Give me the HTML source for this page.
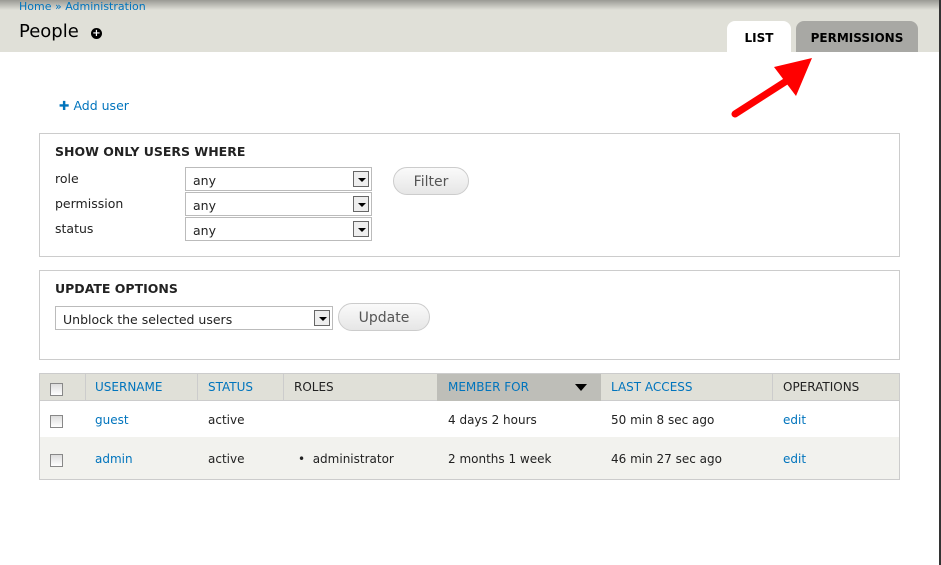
<!DOCTYPE html>
<html><head><meta charset="utf-8"><style>
*{margin:0;padding:0;box-sizing:border-box}
body{width:941px;height:565px;overflow:hidden;background:#fff;font-family:"DejaVu Sans","Liberation Sans",sans-serif;font-size:12px;color:#222;position:relative}
.hdr{position:absolute;left:0;top:0;width:941px;height:52px;background:#e0e0d8}
.hdr:before{content:"";position:absolute;left:0;top:0;right:0;height:10px;background:linear-gradient(#9a9a94,#e0e0d8)}
a,.lnk{color:#0074bd;text-decoration:none}
.abs{position:absolute}
.tab{position:absolute;top:21px;height:31px;border-radius:8px 8px 0 0;font-weight:bold;font-size:12px;text-align:center;line-height:35px;color:#000}
.box{position:absolute;left:39px;width:861px;border:1px solid #ccc}
.sel{position:absolute;height:24px;border:1px solid #bbb;background:#fff;padding-left:7px;line-height:25px;font-size:12.5px}
.sel i{position:absolute;right:2px;top:3px;width:16px;height:16px;border:1px solid #666;background:#eee}
.sel i:after{content:"";position:absolute;left:4px;top:6px;border:4px solid transparent;border-top:4px solid #000;border-bottom:0}
.btn{position:absolute;height:28px;border:1px solid #ccc;border-radius:14px;background:linear-gradient(#fafafa,#e6e6e6);color:#555;font-size:14px;text-align:center;line-height:28px}
.cb{position:absolute;width:13px;height:13px;border:1px solid #888;background:linear-gradient(#ddd,#fff)}
.t{position:absolute;font-size:12px}
</style></head><body>
<div class="hdr"></div>
<div class="abs" style="left:19px;top:0;font-size:11px;color:#0074bd">Home » Administration</div>
<div class="abs" style="left:19px;top:21px;font-size:18px;color:#000">People</div>
<div class="abs" style="left:91px;top:28px;width:11px;height:11px;border-radius:50%;background:#000;color:#fff;font-size:10px;line-height:11px;text-align:center;font-weight:bold">+</div>
<div class="tab" style="left:727px;width:64px;background:#fff">LIST</div>
<div class="tab" style="left:796px;width:122px;background:#a8a8a4">PERMISSIONS</div>
<div class="abs" style="left:939px;top:0;width:2px;height:565px;background:#333"></div>
<svg class="abs" style="left:728px;top:56px" width="90" height="62"><path d="M7 58 L60 24" stroke="#f00" stroke-width="7" stroke-linecap="round"/><path d="M84 2 L46 11 L68 40 Z" fill="#f00"/></svg>
<div class="abs" style="left:59px;top:98px;font-size:12.5px;color:#0074bd"><b>✚</b> Add user</div>
<div class="box" style="top:133px;height:124px"></div>
<div class="abs" style="left:55px;top:144px;font-weight:bold;font-size:12.5px">SHOW ONLY USERS WHERE</div>
<div class="t" style="left:55px;top:171px;font-size:12.5px">role</div>
<div class="t" style="left:55px;top:196px;font-size:12.5px">permission</div>
<div class="t" style="left:55px;top:221px;font-size:12.5px">status</div>
<div class="sel" style="left:185px;top:167px;width:187px">any<i></i></div>
<div class="sel" style="left:185px;top:192px;width:187px">any<i></i></div>
<div class="sel" style="left:185px;top:217px;width:187px">any<i></i></div>
<div class="btn" style="left:393px;top:167px;width:76px">Filter</div>
<div class="box" style="top:270px;height:90px"></div>
<div class="abs" style="left:55px;top:281px;font-weight:bold;font-size:12.5px">UPDATE OPTIONS</div>
<div class="sel" style="left:55px;top:306px;width:278px">Unblock the selected users<i></i></div>
<div class="btn" style="left:338px;top:303px;width:92px">Update</div>
<div class="box" style="top:373px;height:107px;background:#fff"></div>
<div class="abs" style="left:40px;top:374px;width:859px;height:27px;background:#e0e0d8;border-bottom:1px solid #ccc"></div>
<div class="abs" style="left:437px;top:374px;width:164px;height:27px;background:#bebeb8"></div>
<div class="abs" style="left:85px;top:374px;width:1px;height:27px;background:#ccc"></div>
<div class="abs" style="left:197px;top:374px;width:1px;height:27px;background:#ccc"></div>
<div class="abs" style="left:283px;top:374px;width:1px;height:27px;background:#ccc"></div>
<div class="abs" style="left:772px;top:374px;width:1px;height:27px;background:#ccc"></div>
<div class="abs" style="left:40px;top:437px;width:859px;height:42px;background:#f2f2ee"></div>
<div class="cb" style="left:50px;top:383px"></div>
<div class="cb" style="left:50px;top:415px"></div>
<div class="cb" style="left:50px;top:454px"></div>
<div class="t lnk" style="left:95px;top:380px">USERNAME</div>
<div class="t lnk" style="left:208px;top:380px">STATUS</div>
<div class="t" style="left:294px;top:380px">ROLES</div>
<div class="t lnk" style="left:448px;top:380px">MEMBER FOR</div>
<div class="abs" style="left:575px;top:384px;border:6px solid transparent;border-top:7px solid #000;border-bottom:0"></div>
<div class="t lnk" style="left:611px;top:380px">LAST ACCESS</div>
<div class="t" style="left:783px;top:380px">OPERATIONS</div>
<div class="t lnk" style="left:95px;top:413px">guest</div>
<div class="t" style="left:208px;top:413px">active</div>
<div class="t" style="left:448px;top:413px">4 days 2 hours</div>
<div class="t" style="left:611px;top:413px">50 min 8 sec ago</div>
<div class="t lnk" style="left:783px;top:413px">edit</div>
<div class="t lnk" style="left:95px;top:452px">admin</div>
<div class="t" style="left:208px;top:452px">active</div>
<div class="t" style="left:298px;top:452px">•&nbsp; administrator</div>
<div class="t" style="left:448px;top:452px">2 months 1 week</div>
<div class="t" style="left:611px;top:452px">46 min 27 sec ago</div>
<div class="t lnk" style="left:783px;top:452px">edit</div>
</body></html>
